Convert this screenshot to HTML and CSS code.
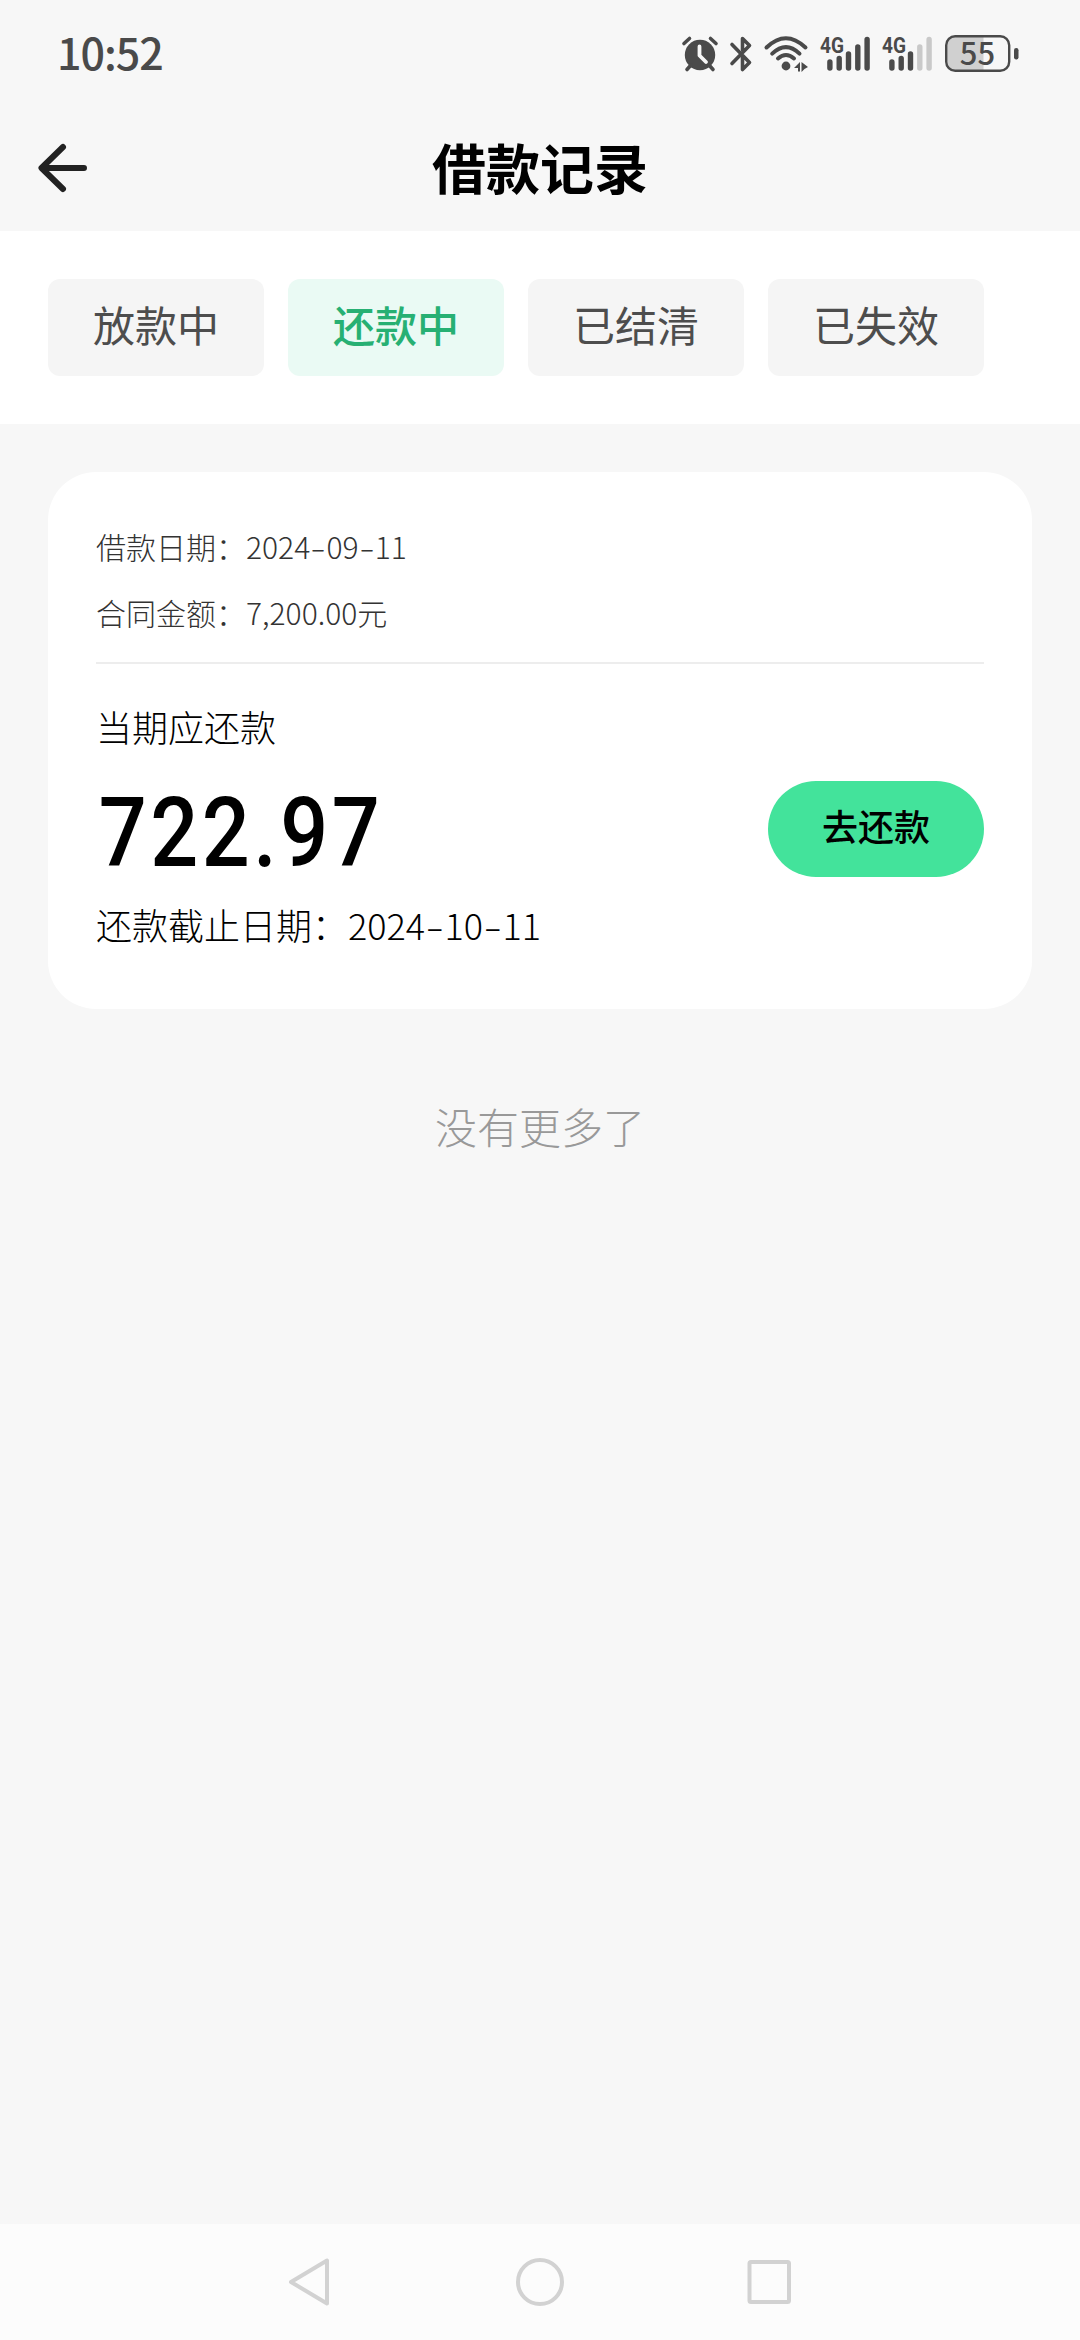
FILE: index.html
```html
<!DOCTYPE html>
<html lang="zh-CN">
<head>
	<meta charset="utf-8">
	<title>借款记录</title>
	<link rel="stylesheet" href="styles.css">
</head>
<body>
	<div class="statusbar">
		<span class="time">10:52</span>
		<div class="status-icons">
			<!-- alarm -->
			<svg class="ic-alarm" width="36" height="36" viewBox="0 0 36 36">
				<circle cx="18" cy="19" r="15.2" fill="#4a4a4a"/>
				<path d="M2 7.5L7.5 2.5M34 7.5L28.500 2.500M5 33.500L9 29M31 33.500L27 29" stroke="#4a4a4a" stroke-width="3.600" stroke-linecap="round"/>
				<path d="M17.500 10.500V19.500L24 26" fill="none" stroke="#f7f7f7" stroke-width="3.800" stroke-linecap="round" stroke-linejoin="round"/>
			</svg>
			<!-- bluetooth -->
			<svg class="ic-bt" width="22" height="36" viewBox="0 0 22 36">
				<path d="M2 8.500L19.500 26.500L12.500 33.500V21.500M12.500 14V2.500L19.500 9.500L2 27.500" fill="none" stroke="#4a4a4a" stroke-width="3.600" stroke-linecap="round" stroke-linejoin="round"/>
			</svg>
			<!-- wifi -->
			<svg class="ic-wifi" width="45" height="36" viewBox="0 0 45 36">
				<path d="M2.500 11.500Q21.800 -7 41.500 11.500M8.200 17.600Q22 4.500 35.500 17.600M14 22.500Q22 15.500 30 22.500" fill="none" stroke="#4a4a4a" stroke-width="4" stroke-linecap="round"/>
				<circle cx="22" cy="30" r="4.400" fill="#4a4a4a"/>
				<path d="M30 32L36 26V35.500H34V32ZM37.500 26L44 31L40.500 33L37.500 36Z" fill="#4a4a4a"/>
			</svg>
			<!-- sim 1 -->
			<svg class="ic-sim" width="51" height="36" viewBox="0 0 51 36">
				<text class="net" x="0" y="17" textLength="24" lengthAdjust="spacingAndGlyphs">4G</text>
				<path d="M9.900 26V32M19.200 22.500V32M28.500 18V32M37.800 11V32M47.100 3.500V32" stroke="#4a4a4a" stroke-width="5.400" stroke-linecap="round"/>
			</svg>
			<!-- sim 2 -->
			<svg class="ic-sim" width="51" height="36" viewBox="0 0 51 36">
				<text class="net" x="0" y="17" textLength="24" lengthAdjust="spacingAndGlyphs">4G</text>
				<path d="M9.900 26V32M19.200 22.500V32M28.500 18V32" stroke="#4a4a4a" stroke-width="5.400" stroke-linecap="round"/>
				<path d="M37.800 11V32M47.100 3.500V32" stroke="#c9c9c9" stroke-width="5.400" stroke-linecap="round"/>
			</svg>
			<!-- battery -->
			<svg class="ic-battery" width="74" height="38" viewBox="0 0 74 38">
				<path d="M38.500 2H11Q2 2 2 11V26Q2 35 11 35H38.500Z" fill="#d0d0d0"/>
				<rect x="1.200" y="1.200" width="63" height="34.600" rx="9" fill="none" stroke="#4a4a4a" stroke-width="2.400"/>
				<rect x="69" y="13" width="4.500" height="11.500" rx="2.200" fill="#4a4a4a"/>
				<text class="level" x="32.500" y="30" text-anchor="middle">55</text>
			</svg>
		</div>
	</div>

	<div class="header">
		<svg class="back" width="50" height="50" viewBox="0 0 50 50">
			<path d="M25 4L3.500 25L25 46M4 25H46" fill="none" stroke="#222" stroke-width="6" stroke-linecap="round" stroke-linejoin="round"/>
		</svg>
		<h1>借款记录</h1>
	</div>

	<div class="tabs">
		<div class="tab">放款中</div>
		<div class="tab active">还款中</div>
		<div class="tab">已结清</div>
		<div class="tab">已失效</div>
	</div>

	<div class="content">
		<div class="card">
			<div class="info">
				<p>借款日期：2024<i>-</i>09<i>-</i>11</p>
				<p>合同金额：7,200.00元</p>
			</div>
			<div class="bill">
				<div class="bill-left">
					<p class="label">当期应还款</p>
					<p class="amount">722.97</p>
					<p class="label due">还款截止日期：2024<i>-</i>10<i>-</i>11</p>
				</div>
				<div class="btn">去还款</div>
			</div>
		</div>
		<p class="nomore">没有更多了</p>
	</div>

	<div class="navbar">
		<svg width="48" height="48" viewBox="0 0 48 48"><path d="M40 2.500V45.500L4 24Z"/></svg>
		<svg width="48" height="48" viewBox="0 0 48 48"><circle cx="24" cy="24" r="22"/></svg>
		<svg width="48" height="48" viewBox="0 0 48 48"><rect x="4.500" y="4" width="39.500" height="40" rx="1.500"/></svg>
	</div>
</body>
</html>
```

FILE: styles.css
```css
* {
	box-sizing: border-box;
	margin: 0;
	padding: 0;
}
body {
	display: flex;
	flex-direction: column;
	width: 1080px;
	height: 2340px;
	overflow: hidden;
	background: #f7f7f7;
	color: #000;
	font-family: "Noto Sans CJK SC", sans-serif;
}
svg {
	display: block;
	overflow: visible;
}

/* status bar */
.statusbar {
	display: flex;
	justify-content: space-between;
	height: 107px;
	padding: 0 61px 0 57px;
}
.time {
	font-size: 43px;
	font-weight: 500;
	line-height: 60px;
	letter-spacing: -1px;
	padding-top: 21px;
	color: #4a4a4a;
}
.status-icons {
	display: flex;
	align-items: flex-start;
	padding-top: 36px;
}
.ic-bt { margin-left: 12px; }
.ic-wifi { margin-left: 12px; }
.ic-sim { margin-left: 11px; }
.ic-battery {
	margin-left: 12px;
	margin-top: -1px;
}
.net {
	font: 700 22px Roboto, sans-serif;
	fill: #4a4a4a;
}
.level {
	font: 500 31px "Noto Sans CJK SC", sans-serif;
	fill: #4a4a4a;
}

/* title */
.header {
	display: grid;
	grid-template-columns: 50px 1fr 50px;
	align-items: center;
	height: 124px;
	padding: 0 38px;
}
.header h1 {
	margin-bottom: 4px;
	text-align: center;
	font-size: 54px;
	font-weight: 700;
	line-height: 80px;
}
.back {
	margin-bottom: 2px;
}

/* tabs */
.tabs {
	display: flex;
	gap: 24px;
	height: 193px;
	padding: 48px;
	background: #fff;
}
.tab {
	width: 216px;
	height: 97px;
	border-radius: 12px;
	background: #f5f5f5;
	color: #4d4d4d;
	font-size: 42px;
	line-height: 90px;
	text-align: center;
}
.tab.active {
	background: #eafaf4;
	color: #27b073;
	font-weight: 500;
}

/* loan card */
.content {
	flex: 1;
	padding: 48px;
}
.card {
	height: 537px;
	padding: 41px 48px 0;
	border-radius: 48px;
	background: #fff;
}
.info {
	height: 151px;
	border-bottom: 2px solid #ededed;
	font-size: 30px;
	font-weight: 300;
	line-height: 66px;
	color: #333;
}
i {
	display: inline-block;
	width: .54em;
	font-style: normal;
	text-align: center;
	transform: scaleX(1.5);
}
.bill {
	display: flex;
	justify-content: space-between;
	align-items: flex-start;
}
.label {
	font-size: 36px;
	font-weight: 300;
	line-height: 54px;
	padding-top: 35px;
}
.due {
	padding-top: 0;
}
.amount {
	height: 144px;
	font: 500 96px/144px Roboto, sans-serif;
	letter-spacing: 4px;
	padding: 8px 0 0 3px;
	transform: scaleX(.88);
	transform-origin: left;
}
.btn {
	width: 216px;
	height: 96px;
	margin-top: 117px;
	border-radius: 48px;
	background: #43e39b;
	font-size: 36px;
	font-weight: 500;
	line-height: 89px;
	text-align: center;
}
.nomore {
	padding-top: 86px;
	color: #999;
	font-size: 42px;
	font-weight: 300;
	line-height: 62px;
	text-align: center;
}

/* system navigation */
.navbar {
	display: flex;
	justify-content: center;
	gap: 181px;
	height: 116px;
	padding-top: 34px;
	background: #fcfcfc;
}
.navbar svg {
	fill: none;
	stroke: #d2d2d2;
	stroke-width: 4;
	stroke-linejoin: round;
}
```
